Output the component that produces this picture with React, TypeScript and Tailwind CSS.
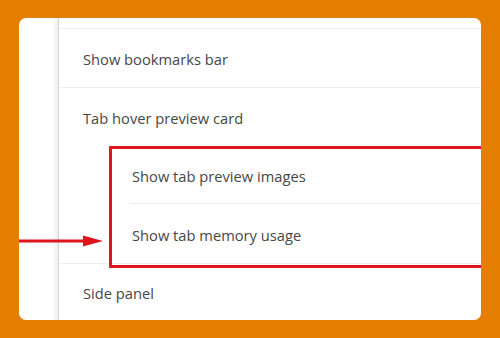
import React from "react";

function Row({ label, className = "" }: { label: string; className?: string }) {
  return (
    <div className={`flex items-center text-[14.7px] text-[#474747] ${className}`}>
      <span className="pt-[3px]">{label}</span>
    </div>
  );
}

export default function App() {
  return (
    <div
      className="w-[500px] h-[338px] bg-[#e47f02] pt-[18px] pl-[19px]"
      style={{ fontFamily: '"Open Sans", "Noto Sans", sans-serif' }}
    >
      <div className="relative w-[462px] h-[302px] rounded-[7px] bg-white overflow-hidden flex">
        <div className="w-[39px] shrink-0" />
        <div className="flex-1 flex flex-col border-l border-[#d6d6d6] shadow-[-3px_0_4px_rgba(0,0,0,0.07)]">
          <div className="h-[11px] shrink-0 border-b border-[#eef0ee]" />
          <Row label="Show bookmarks bar" className="h-[59px] pl-[24px] border-b border-[#eef0ee]" />
          <Row label="Tab hover preview card" className="h-[58px] pl-[24px]" />
          <div className="ml-[71px] flex flex-col">
            <Row label="Show tab preview images" className="h-[58px] pl-[2px] border-b border-[#eef0ee]" />
            <Row label="Show tab memory usage" className="h-[59px] pl-[2px]" />
          </div>
          <Row label="Side panel" className="flex-1 pl-[24px] border-t border-[#eef0ee]" />
        </div>

        <div className="absolute left-[90px] top-[128px] w-[400px] h-[122px] border-[3px] border-[#e0141c] rounded-[1px]" />

        <svg className="absolute left-0 top-[215px]" width="90" height="16" viewBox="0 0 90 16">
          <line x1="0" y1="8" x2="68" y2="8" stroke="#e0141c" strokeWidth="3" />
          <polygon points="64,2.5 84,8 64,13.5" fill="#e0141c" />
        </svg>
      </div>
    </div>
  );
}
